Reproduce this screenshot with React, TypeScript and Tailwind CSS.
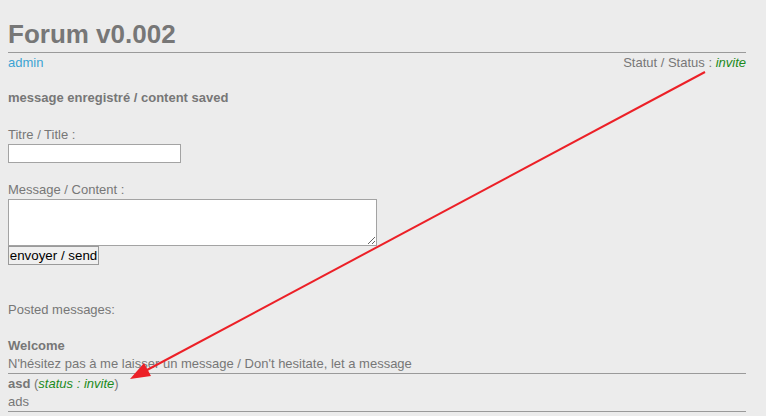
export default function App() {
  const messages = [
    { titre: 'Welcome', statut: '', contenu: "N'hésitez pas à me laisser un message / Don't hesitate, let a message" },
    { titre: 'asd', statut: 'invite', contenu: 'ads' },
  ];

  return (
    <div className="relative min-h-screen bg-[#ececec] px-2 text-[13px] text-[#777] [font-family:'Liberation_Sans',Arial,sans-serif]">
      <div className="w-[738px]">
        {/* entête */}
        <h1 className="pt-[19px] text-[26px] font-bold leading-[30px] text-[#777]">Forum v0.002</h1>
        <div className="mt-[3px] h-px bg-[#9a9a9a]" />
        <div className="mt-[2px] flex justify-between leading-[15px]">
          <span className="text-[#3ca3d3]">admin</span>
          <span>
            Statut / Status : <i className="text-[#1b8a1b]">invite</i>
          </span>
        </div>

        <p className="mt-[20px] font-bold leading-[15px]">message enregistré / content saved</p>

        {/* formulaire */}
        <form className="mt-[22px] flex flex-col items-start" onSubmit={e => e.preventDefault()}>
          <label className="leading-[15px]">Titre / Title :</label>
          <input type="text" className="mt-[2px] h-[19px] w-[173px] border border-[#a3a3a3] bg-white px-1 text-[13px]" />
          <label className="mt-[19px] leading-[15px]">Message / Content :</label>
          <textarea className="mt-[2px] h-[47px] w-[369px] border border-[#a3a3a3] bg-white p-1 text-[13px]" />
          <button type="submit" className="h-[19px] w-[91px] border border-[#9a9a9a] bg-[#efefef] text-[13.33px] leading-[17px] text-black">
            envoyer / send
          </button>
        </form>

        <p className="mt-[37px] leading-[15px]">Posted messages:</p>

        {/* messages */}
        <div className="mt-[19px]">
          {messages.map((m, i) => (
            <div key={i} className="border-b border-[#9a9a9a] pt-px leading-[18px]">
              <div>
                <b>{m.titre}</b>
                {m.statut && (
                  <>
                    {' ('}
                    <i className="text-[#1b8a1b]">status : {m.statut}</i>
                    {')'}
                  </>
                )}
              </div>
              <div>{m.contenu}</div>
            </div>
          ))}
        </div>
      </div>

      {/* annotation flèche */}
      <svg className="pointer-events-none absolute inset-0" width="766" height="416">
        <line x1="705" y1="72" x2="147" y2="370" stroke="#ec2027" strokeWidth="2" />
        <polygon points="130,379 151,376 144,363" fill="#ec2027" />
      </svg>
    </div>
  );
}
